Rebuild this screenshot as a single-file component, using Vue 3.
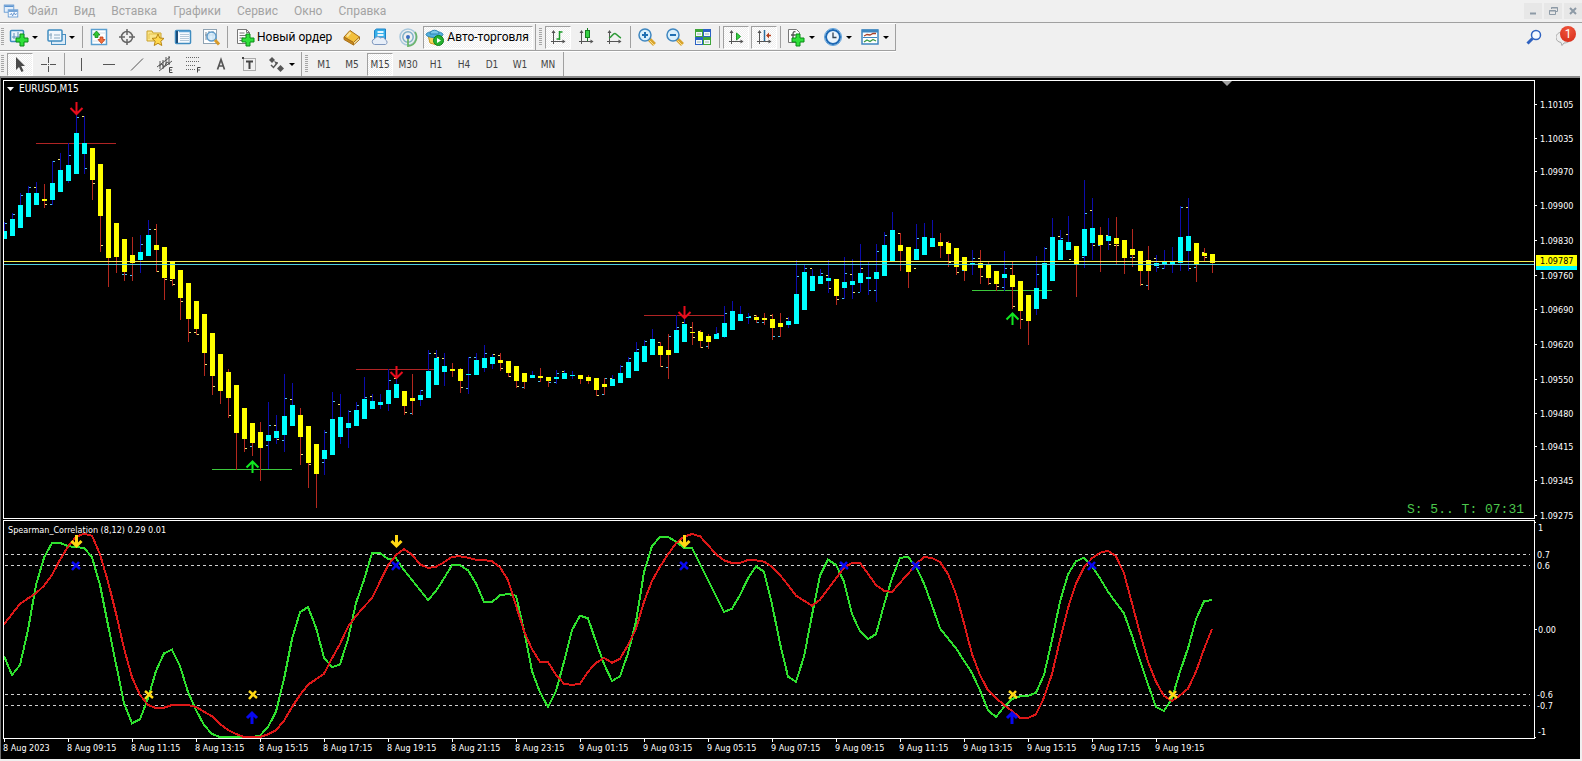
<script setup>
const menus = ['Файл', 'Вид', 'Вставка', 'Графики', 'Сервис', 'Окно', 'Справка']

const plus = (x, y) =>
  `<path d="M${x + 4} ${y}h4v4h4v4h-4v4h-4v-4h-4v-4h4z" fill="#2fe03a" stroke="#0b8a17"/>`

const axes = '<path d="M5.500 4v13M3 14.500h14" stroke="#555" fill="none"/><path d="M3.500 6l2-3 2 3zM14.500 12.500l3 2-3 2z" fill="#555"/>'

const icons = {
  app: '<rect x="1.500" y="2.500" width="12" height="9" fill="#e4effb" stroke="#5b93cf"/><path d="M2 4h11" stroke="#5b93cf" stroke-width="2"/><rect x="6.500" y="8.500" width="12" height="9" fill="#f4f9ff" stroke="#5b93cf"/><path d="M7 10h11" stroke="#5b93cf" stroke-width="2"/><path d="M8.500 15l2-2 1.500 3 2-4 1.500 3 1.500-2" fill="none" stroke="#4b83c4"/>',
  newChart: '<rect x="1.500" y="3.500" width="13" height="11" rx="1" fill="#eaf4fc" stroke="#3f8cc0" stroke-width="1.500"/><path d="M5 6v6M3 10h9M9 5v5" stroke="#5a8fb8"/>' + plus(7, 7),
  profiles: '<rect x="5.500" y="7.500" width="14" height="10" fill="#dcebf7" stroke="#4a8fbf"/><rect x="2" y="3" width="14" height="11" rx="1" fill="#f2f8fd" stroke="#3f8cc0" stroke-width="1.500"/><path d="M5 6v6M3 8h3M8 8h6M8 11h6" stroke="#8aa9c0"/>',
  market: '<rect x="2.500" y="2.500" width="15" height="15" fill="#fff" stroke="#5a9fd0" stroke-width="1.500"/><path d="M4 14h12M4 6h12" stroke="#d5dfe6"/><path d="M7.500 4l3.500 4h-2v2.500h-3v-2.500h-2z" fill="#32c832" stroke="#12851b" stroke-width=".8"/><path d="M12.500 16.500l3.500-4h-2v-2.500h-3v2.500h-2z" fill="#f0713d" stroke="#c23a14" stroke-width=".8"/>',
  target: '<circle cx="10" cy="10" r="5.500" fill="none" stroke="#666" stroke-width="1.500"/><path d="M10 2v6M10 12v6M2 10h6M12 10h6" stroke="#666" stroke-width="1.500"/>',
  navigator: '<path d="M2 4h5l1 2h8v8H2z" fill="#fbe58a" stroke="#c9a12c"/><path d="M4 12V7h12" fill="none" stroke="#e5c44f"/><path d="M13 7l1.800 4 4.200.4-3.200 2.900 1 4.200-3.800-2.200-3.800 2.200 1-4.200L7 11.400l4.200-.4z" fill="#ffd84d" stroke="#b98612"/>',
  terminal: '<rect x="2.500" y="3.500" width="15" height="13" rx="1" fill="#f7fbff" stroke="#3f8cc0" stroke-width="1.500"/><path d="M4 4v12" stroke="#1c4d7a" stroke-width="2"/><path d="M7 7.500h9M7 9.500h9M7 11.500h9M7 13.500h9" stroke="#b5c9d9"/><path d="M6 4.500h11" stroke="#5aa3d6" stroke-width="1.500"/>',
  tester: '<rect x="2.500" y="2.500" width="13" height="14" fill="#fff" stroke="#8fa3b3"/><path d="M5 5v8M8 4v9M12 4v9M4 8h10" stroke="#7b8b99"/><circle cx="10.500" cy="9.500" r="4.500" fill="#d6ecfb" fill-opacity=".85" stroke="#5e9ccb" stroke-width="1.500"/><path d="M14 13l4 4.500" stroke="#d79a2a" stroke-width="3"/>',
  order: '<path d="M2.500 2.500h9l3 3v11h-12z" fill="#fdfdfd" stroke="#777"/><path d="M11.500 2.500v3h3" fill="none" stroke="#777"/><path d="M4.500 6h5M4.500 8.500h7M4.500 11h4M4.500 13.500h3" stroke="#777"/>' + plus(7, 7),
  gold: '<path d="M2 10l6-6.500 9.500 6.500-6 5.500z" fill="#f3c03c" stroke="#a8701a"/><path d="M2 10l9.500 5.500v2.500L2 12.500z" fill="#c98a1c" stroke="#a8701a"/><path d="M11.500 15.500l6-5.500v2.500l-6 5.500z" fill="#fff0b0" stroke="#a8701a"/><path d="M5 9.500l3.500-4" stroke="#fbe39a" stroke-width="2"/>',
  cloud: '<path d="M4.500 3.500l2-1.500h9v10h-11z" fill="#38b0ea" stroke="#1c83c6"/><path d="M7.500 5h6M7.500 8h6" stroke="#e4f6ff" stroke-width="2"/><path d="M4.500 17.500a2.800 2.800 0 0 1 0-5.500 3.500 3.500 0 0 1 6-1 3.200 3.200 0 0 1 5 2 2.400 2.400 0 0 1 0 4.500z" fill="#e7eef8" stroke="#7f98bf"/>',
  signal: '<circle cx="10" cy="10" r="8" fill="none" stroke="#a8c8dd" stroke-width="1.500"/><circle cx="10" cy="10" r="5.200" fill="none" stroke="#7fb0c8" stroke-width="1.500"/><path d="M10 10v9a9 9 0 0 0 8-6 9 9 0 0 0-1-8" fill="none" stroke="#6cb56c" stroke-width="1.800"/><circle cx="10" cy="10" r="2" fill="#3d6fc0"/>',
  auto: '<path d="M3 8l2 8 7 2 4-5 1-5z" fill="#f5d35a" stroke="#c99a1e"/><ellipse cx="9.500" cy="7.500" rx="8.500" ry="3" fill="#54b0dd" stroke="#2b84b4"/><path d="M5 7c0-5 9-5 9 0z" fill="#7cc8ea" stroke="#2b84b4"/><circle cx="13.500" cy="13.500" r="5" fill="#25b12f" stroke="#0d7f1a"/><path d="M12 11v5l4-2.500z" fill="#fff"/>',
  bars: axes + '<path d="M11.500 4v9M11.500 5h3M8.500 12h3" stroke="#1d9a2a" stroke-width="1.500"/>',
  candles: axes + '<path d="M11.500 1v13" stroke="#167d20"/><rect x="9.500" y="3.500" width="4" height="7" fill="#35d243" stroke="#167d20"/>',
  line: axes + '<path d="M5 11c3-1 4-5 6-4.500S14 10 17 11" fill="none" stroke="#2e9a38" stroke-width="1.500"/>',
  zoomIn: '<path d="M12 12l5.500 5.500" stroke="#d8a42e" stroke-width="4"/><path d="M12.500 13.500l4.500 4.500" stroke="#fbe08a"/><circle cx="8" cy="8" r="6" fill="#d9effb" stroke="#3f87c0" stroke-width="1.500"/><path d="M5 8h6M8 5v6" stroke="#1f6fb2" stroke-width="2"/>',
  zoomOut: '<path d="M12 12l5.500 5.500" stroke="#d8a42e" stroke-width="4"/><path d="M12.500 13.500l4.500 4.500" stroke="#fbe08a"/><circle cx="8" cy="8" r="6" fill="#d9effb" stroke="#3f87c0" stroke-width="1.500"/><path d="M5 8h6" stroke="#1f6fb2" stroke-width="2"/>',
  tile: '<rect x="2" y="2" width="8" height="8" fill="#3ea53a"/><rect x="10" y="2" width="8" height="8" fill="#2b62c4"/><rect x="2" y="10" width="8" height="8" fill="#2b62c4"/><rect x="10" y="10" width="8" height="8" fill="#3ea53a"/><path d="M3 5h6v4H3zM11 5h6v4h-6zM3 13h6v4H3zM11 13h6v4h-6z" fill="#f4f8fc"/><path d="M4 7h4M12 7h4M4 15h4M12 15h4" stroke="#9ab8a8"/>',
  scroll: axes + '<path d="M10.500 6l4 3.500-4 3.500z" fill="#35d243" stroke="#1d9a2a"/>',
  shift: axes + '<path d="M10.500 3v11" stroke="#2a6f9f" stroke-width="1.500"/><path d="M17 8.500h-3" stroke="#b4401c" stroke-width="1.500"/><path d="M12 8.500l3-3v6z" fill="#b4401c"/>',
  indicators: '<path d="M2.500 2.500h8l3 3v10h-11z" fill="#fdfdfd" stroke="#777"/><path d="M9.500 5c-2-1-2.500.5-2.500 2v5.500M5 8h4.500" fill="none" stroke="#555" stroke-width="1.300"/>' + plus(6, 7),
  clock: '<circle cx="10" cy="10" r="7" fill="#eaf4fc" stroke="#1c68b4" stroke-width="2"/><circle cx="10" cy="10" r="8.500" fill="none" stroke="#5aa0dc" stroke-width="1"/><path d="M10 5.500V10.500h3.500" fill="none" stroke="#345" stroke-width="1.300"/>',
  template: '<rect x="2" y="3" width="16" height="14" fill="#fff" stroke="#3f87c0" stroke-width="1.500"/><path d="M2 4h16" stroke="#3f87c0" stroke-width="3"/><path d="M3 10.500h14" stroke="#3f87c0"/><path d="M4 9l3-1.500 3 .5 3-1.500h3" fill="none" stroke="#a8432a" stroke-width="1.300"/><path d="M4 15l3-2 3 1.500 3-2 3 1.500" fill="none" stroke="#3a9a44" stroke-width="1.300"/>',
  cursor: '<path d="M6 3v13l3-3 2.500 5 2-1-2.300-5H15z" fill="#4a4a4a"/>',
  cross: '<path d="M10.500 3v6M10.500 12v6M3 10.500h6M12 10.500h6" stroke="#555"/><path d="M10 10h1v1h-1z" fill="#555"/>',
  vline: '<path d="M10.500 4v13" stroke="#555"/>',
  hline: '<path d="M4 10.500h12" stroke="#555"/>',
  trend: '<path d="M4 16.500L16 4.500" stroke="#555"/>',
  channel: '<path d="M2 13L15 3M4 17L17 7" stroke="#555"/><path d="M5 7v8M8 6v9M11 3v9M14 2v9M4 12l3-2 2 3 3-5 3 2" fill="none" stroke="#555"/><path d="M17.500 13.500h-3v5h3M14.500 16h2.500" fill="none" stroke="#444"/>',
  fibo: '<path d="M3 3.500h14M3 7.500h14M3 11.500h10M3 15.500h9" stroke="#666" stroke-dasharray="1 1"/><path d="M17.500 13.500h-3v5M14.500 16h2.500" fill="none" stroke="#444"/>',
  textA: '<path d="M6.500 15.500l3.500-10 3.500 10M8 12h4" fill="none" stroke="#555" stroke-width="1.700"/>',
  textT: '<rect x="4.500" y="4.500" width="12" height="12" fill="none" stroke="#666" stroke-dasharray="1 1"/><path d="M7 7.500h7M10.500 8v7" stroke="#444" stroke-width="2"/><path d="M3 3h2v2H3z" fill="#444"/>',
  shapes: '<path d="M6 3l3 3-3 3-3-3z" fill="#555"/><path d="M8 7l4 1.500-2 2z" fill="#555"/><path d="M14.500 11l3.500 3.500-3.500 3.500-3.500-3.500z" fill="#555"/><path d="M5 11l2.500 2.500 4-5" fill="none" stroke="#555" stroke-width="1.500"/>',
  search: '<circle cx="12" cy="8" r="4.500" fill="#f5f9ff" stroke="#2f62c0" stroke-width="1.500"/><path d="M8.500 11.500L3.500 16.500" stroke="#2f62c0" stroke-width="3"/>',
  chat: '<path d="M7 5c5 0 8 2.500 8 5.500S12 16 8 16l-2 2.500-1-3C2 15 0 13 0 10.500S2 5 7 5z" fill="#eee" stroke="#a8a8a8"/>'
}

const mainTools = [
  { id: 'newChart', label: 'Новый график', drop: true },
  { id: 'profiles', label: 'Профили', drop: true },
  { sep: true },
  { id: 'market', label: 'Обзор рынка' },
  { id: 'target', label: 'Окно данных' },
  { id: 'navigator', label: 'Навигатор' },
  { id: 'terminal', label: 'Терминал' },
  { id: 'tester', label: 'Тестер стратегий' },
  { sep: true },
  { id: 'order', label: 'Новый ордер', text: 'Новый ордер' },
  { id: 'gold', label: 'Редактор' },
  { id: 'cloud', label: 'Облако' },
  { id: 'signal', label: 'Сигналы' },
  { id: 'auto', label: 'Авто-торговля', text: 'Авто-торговля', on: true }
]

const chartTools = [
  { id: 'bars', label: 'Бары', on: true },
  { id: 'candles', label: 'Свечи' },
  { id: 'line', label: 'Линия' },
  { sep: true },
  { id: 'zoomIn', label: 'Увеличить' },
  { id: 'zoomOut', label: 'Уменьшить' },
  { id: 'tile', label: 'Окна мозаикой' },
  { sep: true },
  { id: 'scroll', label: 'Автопрокрутка', on: true },
  { id: 'shift', label: 'Сдвиг графика', on: true },
  { sep: true },
  { id: 'indicators', label: 'Индикаторы', drop: true },
  { id: 'clock', label: 'Периоды', drop: true },
  { id: 'template', label: 'Шаблоны', drop: true }
]

const drawTools = [
  { id: 'cursor', label: 'Курсор', on: true },
  { id: 'cross', label: 'Перекрестие' },
  { sep: true },
  { id: 'vline', label: 'Вертикальная линия' },
  { id: 'hline', label: 'Горизонтальная линия' },
  { id: 'trend', label: 'Трендовая линия' },
  { id: 'channel', label: 'Канал' },
  { id: 'fibo', label: 'Фибоначчи' },
  { id: 'textA', label: 'Текст' },
  { id: 'textT', label: 'Метка' },
  { id: 'shapes', label: 'Стрелки', drop: true }
]

const frames = ['M1', 'M5', 'M15', 'M30', 'H1', 'H4', 'D1', 'W1', 'MN']

const bars = [4, 8]
const cx = (i) => bars[0] + bars[1] * i

// One bar per entry: direction, wick top, body top, body bottom, wick bottom.
const candles = `
u222,231,239,239 u213,219,236,236 u193,205,228,228 u186,193,217,217 u182,193,205,205 d184,199,201,208
u161,183,200,205 u153,170,192,192 u143,165,181,183 u114,133,174,174 u116,143,154,174 d148,148,180,200
d164,164,216,252 d189,189,258,287 d223,223,257,273 d239,239,272,281 d237,255,263,281 u235,252,260,273
u220,235,256,256 d224,245,250,272 d247,247,278,300 d262,262,279,286 d270,270,298,320 d283,283,319,342
d301,301,329,335 d314,314,353,376 d333,333,376,395 d354,354,391,404 d369,372,398,418 d385,385,433,470
d408,408,439,452 d423,423,443,456 d422,432,448,481 u402,435,441,469 u415,431,438,444 u374,416,435,452
u383,405,426,426 d408,415,437,465 d426,426,463,488 d444,444,474,508 u430,450,459,475 u392,419,455,455
u394,417,437,444 u410,423,428,448 u402,410,426,426 u377,399,419,419 u394,401,409,409 u394,402,405,409
u369,390,404,411 u378,384,398,398 d391,391,406,415 d374,398,401,415 u390,395,400,406 u350,371,398,398
u350,358,385,385 u353,366,372,386 d363,369,371,377 d368,369,381,393 u357,374,375,394 u353,360,375,375
u345,358,368,372 u354,357,364,369 d353,360,363,371 d361,361,373,377 d366,366,381,388 d373,373,382,389
u371,375,378,378 d368,376,378,382 d377,377,381,387 u370,377,379,384 u370,373,379,379 u371,375,376,379
d375,375,379,384 d375,377,381,384 d378,378,390,396 d378,384,387,395 u375,379,386,386 u365,373,383,383
u357,362,378,378 u342,352,371,371 u340,346,362,362 u329,339,355,355 d342,346,355,367 d334,350,355,379
u315,330,353,353 u318,324,342,342 d322,332,333,345 d330,332,341,348 d334,336,342,349 u327,334,339,339
u306,323,337,338 u301,311,330,330 u306,314,321,321 u313,317,318,324 d315,317,320,323 d313,318,320,325
d314,319,328,340 d313,323,327,337 u317,321,325,328 u260,294,324,324 u264,272,310,310 u269,276,291,291
u269,276,284,284 u260,278,281,293 d279,279,296,305 u257,282,288,299 u259,281,285,299 u244,273,283,292
u262,277,279,295 u244,272,279,302 u232,245,276,276 u212,230,261,261 d233,245,251,271 d247,247,272,288
u224,249,260,260 u223,237,255,255 u220,238,247,247 d233,242,246,258 d241,243,254,267 d248,248,267,275
d257,257,271,281 u250,263,264,275 d250,263,268,284 d262,265,278,285 d271,271,284,291 u251,274,278,291
d262,275,287,309 d281,281,311,329 d295,295,321,345 u256,288,309,315 u247,263,299,299 u218,237,281,281
u230,240,260,260 u216,242,250,250 d246,246,264,297 u180,229,256,268 u198,228,243,260 d227,235,245,272
u218,236,241,250 d217,238,244,264 d240,240,258,274 d229,249,255,267 d251,251,271,286 d246,260,271,290
u255,263,266,272 u250,262,265,269 u247,262,265,273 u206,237,263,271 u198,236,251,271 d243,243,264,282
d248,253,256,262 d254,254,263,273`
  .trim()
  .split(/\s+/)
  .map((s, i) => {
    const [top, open, close, bottom] = s.slice(1).split(',').map(Number)
    return { up: s[0] === 'u', x: cx(i), top, open, close, bottom }
  })

// Small level ticks beside the bars: bar index, side, height, colour.
const ticks = `
0R223c 1R214c 2R195c 3R187c 4L187y 5R204y 6R161c 6L204c 7L159y 8R155c 9R117c 10L116y 10R168c 11R183y 12R245y
15L274c 15R274c 16L275c 17R244c 18R229c 19L229y 19R271y 20R279y 21L280y 21R284y 22R301y 23R332y 24L332y 24R334y
25R364y 26R386y 28R415y 30R448y 31L446c 33R425c 33L445c 34L425y 34R439y 35R398c 35L440c 36L399y 37R454y 38R464y
40R432c 40L462c 41R401c 42L404y 43R411c 44R405c 45R397c 46L396y 48R380c 49L378y 50R412y 51L413c 52R390c 53R353c
54L353y 54R357y 55L358y 57R387y 58L388c 58R357c 59L357c 60R353c 61R354y 62L355y 62R368y 63R376y 64R386y 65L387c
67L381c 68R382c 69L382c 69R373c 70L371y 74R395y 75L394c 75R378c 76L378y 77R366c 78R358c 79R349c 80R341c 82L342y
82R366y 83L367c 83R336c 84R327c 85L322y 86L327y 86R337y 87L331y 87R347y 88L346c 89R333c 90R313c 93R316c 94L315y
94R322c 95L322c 95R318y 96L315y 96R336c 97L336c 98L318y 99R276c 100R268c 101L268y 102R273c 103L275y 103R288y
104R299y 105L298c 105R273c 106L274y 106R292y 107L292c 107R268y 108R290c 109L290c 109R251c 110R235c 112L233y
114R238c 114L268y 118L242y 118R262y 119R272y 120L270c 121R258c 122L258y 122R276y 123R283y 124R286y 125L287c
125R268c 126L268y 126R306y 127R319y 129R274c 130R248c 132L236y 132R238c 133L234y 133R259y 134L259y 135R213c
135L257c 136L210y 136R245y 137L245c 138L235y 138R244y 139L245y 139R245y 141L257c 141R257y 142R284y 143L285c
143R268y 144L258y 144R267c 145L268c 147R207c 148L207y 148R268y 149L267c 150L252y 150R257y`
  .trim()
  .split(/\s+/)
  .map((s) => {
    const [, i, side, y, tone] = s.match(/(\d+)([LR])(\d+)(\w)/)
    return { x: cx(+i) + (side === 'R' ? 1 : -2), y: +y, tone }
  })

const levels = [
  { x: 36, y: 143, kind: 'sell' },
  { x: 212, y: 469, kind: 'buy' },
  { x: 356, y: 369, kind: 'sell' },
  { x: 644, y: 315, kind: 'sell' },
  { x: 972, y: 290, kind: 'buy' }
]
const arrows = [
  { x: 76, y: 102, kind: 'sell' },
  { x: 396, y: 366, kind: 'sell' },
  { x: 684, y: 306, kind: 'sell' },
  { x: 252, y: 461, kind: 'buy' },
  { x: 1012, y: 313, kind: 'buy' }
]

const prices = [
  [104, '1.10105'], [138, '1.10035'], [171, '1.09970'], [205, '1.09900'], [240, '1.09830'],
  [275, '1.09760'], [309, '1.09690'], [344, '1.09620'], [379, '1.09550'], [413, '1.09480'],
  [446, '1.09415'], [480, '1.09345'], [515, '1.09275']
]

// Indicator series, in thirds of a pixel below the pane's top.
const toLine = (v) => v.map((y, i) => `${cx(i)},${(515 + y / 3).toFixed(1)}`).join(' ')
const fast = toLine([
  423, 480, 450, 345, 210, 128, 84, 84, 93, 97, 98, 127, 210, 330, 447, 565, 625, 613, 550, 468, 415, 404, 453, 531,
  585, 630, 657, 666, 666, 666, 666, 666, 662, 636, 590, 492, 372, 292, 276, 338, 428, 457, 448, 373, 264, 195, 115,
  114, 132, 130, 165, 195, 225, 255, 228, 190, 151, 151, 166, 205, 261, 261, 241, 237, 242, 345, 468, 532, 576, 528,
  440, 345, 302, 310, 380, 447, 498, 484, 415, 320, 172, 93, 66, 66, 80, 98, 99, 147, 195, 243, 291, 281, 240, 190,
  154, 170, 268, 385, 485, 500, 425, 300, 182, 134, 150, 200, 297, 349, 373, 357, 270, 190, 129, 125, 156, 205, 271,
  340, 370, 400, 437, 474, 526, 586, 606, 576, 552, 544, 543, 533, 480, 375, 260, 178, 139, 128, 153, 190, 230, 263,
  295, 362, 437, 508, 576, 588, 550, 470, 400, 313, 259, 255
])
const slow = toLine([
  328, 297, 267, 250, 235, 212, 180, 134, 95, 66, 56, 62, 118, 200, 295, 400, 487, 540, 570, 579, 578, 570, 570, 570,
  576, 590, 604, 627, 645, 657, 666, 666, 666, 658, 646, 617, 576, 540, 509, 493, 476, 430, 387, 335, 303, 275, 250,
  200, 151, 120, 102, 119, 148, 159, 155, 142, 125, 124, 128, 134, 135, 139, 157, 195, 272, 348, 403, 440, 441, 480,
  506, 510, 506, 470, 444, 429, 443, 431, 390, 342, 260, 198, 155, 118, 85, 65, 57, 64, 90, 118, 136, 144, 144, 135,
  136, 140, 155, 180, 210, 242, 257, 272, 254, 222, 190, 158, 144, 144, 176, 210, 227, 231, 203, 177, 147, 126, 129,
  141, 177, 237, 325, 417, 480, 526, 549, 570, 588, 608, 609, 598, 548, 477, 375, 279, 205, 157, 130, 113, 107, 124,
  175, 265, 355, 440, 500, 543, 558, 541, 521, 470, 402, 342
])
const bands = [554, 565, 694, 705]
const crosses = [
  [75, 565, 'blue'], [395, 565, 'blue'], [683, 565, 'blue'], [843, 565, 'blue'], [915, 565, 'blue'],
  [1091, 565, 'blue'], [148, 694, 'gold'], [252, 694, 'gold'], [1012, 694, 'gold'], [1172, 694, 'gold']
]
const signals = [
  [76, 535, 'gold'], [396, 535, 'gold'], [684, 535, 'gold'], [252, 711, 'blue'], [1012, 711, 'blue']
]
const scale = [
  [527, '1', 4], [554, '0.7', 3], [565, '0.6', 3], [629, '0.00', 4], [694, '-0.6', 3], [705, '-0.7', 3], [731, '-1', 4]
]

const times = [
  '8 Aug 2023', '8 Aug 09:15', '8 Aug 11:15', '8 Aug 13:15', '8 Aug 15:15', '8 Aug 17:15', '8 Aug 19:15',
  '8 Aug 21:15', '8 Aug 23:15', '9 Aug 01:15', '9 Aug 03:15', '9 Aug 05:15', '9 Aug 07:15', '9 Aug 09:15',
  '9 Aug 11:15', '9 Aug 13:15', '9 Aug 15:15', '9 Aug 17:15', '9 Aug 19:15'
]
</script>

<template>
  <div class="terminal">
    <header class="menubar">
      <svg class="app-icon" viewBox="0 0 20 20" v-html="icons.app"></svg>
      <nav class="menus">
        <button v-for="m in menus" :key="m" type="button">{{ m }}</button>
      </nav>
      <div class="window-controls">
        <button type="button" aria-label="Свернуть"><svg viewBox="0 0 16 16"><path d="M5 10.500h6" stroke-width="2" /></svg></button>
        <button type="button" aria-label="Восстановить"><svg viewBox="0 0 16 16"><path d="M6.500 6V4.500h6v4H11M4.500 7.500h6v4h-6zM6 5h7M4 8h7" /></svg></button>
        <button type="button" aria-label="Закрыть"><svg viewBox="0 0 16 16"><path d="M5 5l6 6M11 5l-6 6" stroke-width="2" /></svg></button>
      </div>
    </header>

    <div class="row">
      <div class="toolbar upper">
        <template v-for="(group, g) in [mainTools, chartTools]" :key="g">
          <span class="grip"></span>
          <template v-for="(t, n) in group" :key="n">
            <span v-if="t.sep" class="sep"></span>
            <button v-else type="button" class="tool" :class="{ on: t.on, drop: t.drop, wide: t.text }" :aria-label="t.label">
              <svg class="icon" viewBox="0 0 20 20" v-html="icons[t.id]"></svg>
              <span v-if="t.text">{{ t.text }}</span>
              <i v-if="t.drop" class="caret"></i>
            </button>
          </template>
          <span class="edge"></span>
        </template>
      </div>
      <div class="corner">
        <button type="button" aria-label="Поиск"><svg class="icon" viewBox="0 0 20 20" v-html="icons.search"></svg></button>
        <button type="button" class="chat" aria-label="Сообщения">
          <svg class="icon" viewBox="0 0 20 20" v-html="icons.chat"></svg>
          <span class="badge">1</span>
        </button>
      </div>
    </div>

    <div class="toolbar lower">
      <span class="grip"></span>
      <template v-for="(t, n) in drawTools" :key="n">
        <span v-if="t.sep" class="sep"></span>
        <button v-else type="button" class="tool" :class="{ on: t.on, drop: t.drop }" :aria-label="t.label">
          <svg class="icon" viewBox="0 0 20 20" v-html="icons[t.id]"></svg>
          <i v-if="t.drop" class="caret"></i>
        </button>
      </template>
      <span class="edge"></span>
      <span class="grip"></span>
      <button v-for="f in frames" :key="f" type="button" class="tool frame" :class="{ on: f === 'M15' }">{{ f }}</button>
      <span class="edge"></span>
    </div>

    <main class="chart">
      <div class="plot price">
        <svg class="canvas">
          <g transform="translate(-4 -81)" shape-rendering="crispEdges">
            <rect v-for="(l, n) in levels" :key="'l' + n" :x="l.x" :y="l.y" width="80" height="1" :class="['level', l.kind]" />
            <g v-for="c in candles" :key="c.x" :class="c.up ? 'up' : 'down'">
              <rect class="wick" :x="c.x" :y="c.top" width="1" :height="c.bottom - c.top" />
              <rect class="body" :x="c.x - 2" :y="c.open" width="5" :height="c.close - c.open" />
            </g>
            <rect v-for="(t, n) in ticks" :key="'t' + n" :x="t.x" :y="t.y" width="2" height="1" :class="['tick', t.tone]" />
            <rect class="ask" x="4" y="261" width="100%" height="1" />
            <rect class="bid" x="4" y="264" width="100%" height="1" />
          </g>
          <g transform="translate(-4 -81)">
            <path
              v-for="(a, n) in arrows"
              :key="n"
              :class="['arrow', a.kind]"
              :d="a.kind === 'sell'
                ? `M${a.x + 0.5} ${a.y}v11M${a.x - 5.5} ${a.y + 6}l6 6 6-6`
                : `M${a.x + 0.5} ${a.y + 12}v-11M${a.x - 5.5} ${a.y + 6.5}l6-6 6 6`"
            />
            <path d="M7 87h7l-3.500 4z" fill="#fff" />
            <path d="M1222 81h10l-5 5z" fill="#a0a0a0" />
            <text class="caption title" x="19" y="92">EURUSD,M15</text>
          </g>
        </svg>
        <span class="status">S: 5.. T: 07:31</span>
      </div>
      <svg class="axis price-axis">
        <g transform="translate(-1535 -80)">
          <g v-for="p in prices" :key="p[1]">
            <rect x="1535" :y="p[0]" width="2" height="1" fill="#fff" />
            <text x="1540" :y="p[0] + 4">{{ p[1] }}</text>
          </g>
          <rect x="1536" y="258" width="41" height="12" fill="#00ffff" />
          <rect x="1536" y="255" width="41" height="11" fill="#ffff00" />
          <text class="current" x="1540" y="264">1.09787</text>
        </g>
      </svg>

      <div class="plot study">
        <svg class="canvas">
          <g transform="translate(-4 -521)" shape-rendering="crispEdges">
            <line v-for="y in bands" :key="y" class="band" x1="5" :y1="y + 0.5" x2="100%" :y2="y + 0.5" />
            <polyline class="fast" :points="fast" />
            <polyline class="slow" :points="slow" />
          </g>
          <g transform="translate(-4 -521)">
            <path
              v-for="(s, n) in signals"
              :key="'s' + n"
              :class="['signal', s[2]]"
              :d="s[2] === 'gold'
                ? `M${s[0] + 0.5} ${s[1]}v11M${s[0] - 4.5} ${s[1] + 6}l5 5 5-5`
                : `M${s[0]} ${s[1] + 13}v-11M${s[0] - 5} ${s[1] + 7}l5-5 5 5`"
            />
            <path
              v-for="(c, n) in crosses"
              :key="'c' + n"
              :class="['signal', 'cross', c[2]]"
              :d="`M${c[0] - 3} ${c[1] - 3}l8 7M${c[0] + 4} ${c[1] - 3}l-7 8`"
            />
            <text class="caption" x="8" y="533">Spearman_Correlation (8,12) 0.29 0.01</text>
          </g>
        </svg>
      </div>
      <svg class="axis study-axis">
        <g transform="translate(-1535 -520)">
          <rect x="1535" y="522" width="1" height="1" fill="#fff" />
          <rect x="1535" y="629" width="2" height="1" fill="#fff" />
          <rect x="1535" y="737" width="1" height="1" fill="#fff" />
          <text v-for="s in scale" :key="s[1]" :x="1534 + s[2]" :y="s[0] + 4">{{ s[1] }}</text>
        </g>
      </svg>

      <div class="time-axis">
        <span v-for="t in times" :key="t">{{ t }}</span>
      </div>
    </main>
  </div>
</template>

<style>
html,
body {
  background: #f0f0f0;
}
</style>

<style scoped>
.terminal {
  min-height: 100vh;
  display: flex;
  flex-direction: column;
  box-sizing: border-box;
  background: #f0f0f0;
  font-family: Roboto, "Noto Sans", sans-serif;
  font-size: 12px;
  overflow: hidden;
}
button {
  border: 0;
  margin: 0;
  padding: 0;
  background: none;
  font: inherit;
  color: inherit;
}
.menubar {
  display: flex;
  align-items: center;
  height: 22px;
  border-bottom: 1px solid #a0a0a0;
}
.app-icon {
  width: 16px;
  height: 16px;
  margin-left: 3px;
}
.menus {
  display: flex;
  flex: 1;
  margin-left: 1px;
  color: #a3a3a3;
}
.menus button {
  padding: 0 8px;
  line-height: 18px;
}
.window-controls {
  display: flex;
  gap: 2px;
}
.window-controls button {
  width: 18px;
  height: 16px;
  background: #e7e7e7;
}
.window-controls svg {
  display: block;
  width: 16px;
  height: 16px;
  margin: 0 auto;
  fill: none;
  stroke: #8d9aa6;
}
.row {
  display: flex;
  justify-content: space-between;
}
.toolbar {
  display: flex;
  align-items: center;
}
.upper {
  height: 26px;
  border-top: 1px solid #fff;
  border-bottom: 1px solid #a0a0a0;
  box-shadow: 0 1px 0 #fff;
}
.lower {
  height: 24px;
  margin-top: 1px;
}
.grip {
  width: 3px;
  height: 18px;
  margin: 0 2px 0 1px;
  background: repeating-linear-gradient(#a6a6a6 0 1px, #f0f0f0 1px 2px);
}
.edge {
  width: 1px;
  align-self: stretch;
  margin: 0 2px 0 1px;
  background: #a0a0a0;
}
.edge:last-child {
  margin-right: 0;
}
.sep {
  width: 1px;
  height: 22px;
  margin: 0 2px 0 2px;
  background: #a0a0a0;
}
.tool {
  display: flex;
  align-items: center;
  justify-content: center;
  box-sizing: border-box;
  width: 26px;
  height: 23px;
  margin: 0 1px;
  border: 1px solid transparent;
  white-space: nowrap;
}
.tool.on {
  border-color: #a0a0a0 #fff #fff #a0a0a0;
  background: repeating-conic-gradient(#fff 0 25%, #eee 0 50%) 0 0 / 2px 2px;
}
.tool.drop {
  width: 35px;
  gap: 3px;
  justify-content: flex-start;
  padding-left: 1px;
}
.tool.wide {
  width: auto;
  gap: 2px;
  padding: 0 4px 0 3px;
  color: #000;
}
.tool.wide.on {
  padding: 0 3px 0 1px;
}
.icon {
  display: block;
  flex: none;
  width: 20px;
  height: 20px;
}
.caret {
  border: 3px solid transparent;
  border-top-color: #000;
  border-bottom-width: 0;
}
.frame {
  font-family: "DejaVu Sans Condensed", "DejaVu Sans", sans-serif;
  font-size: 10px;
  color: #444;
}
.corner {
  display: flex;
  align-items: center;
  gap: 12px;
  padding-right: 6px;
}
.chat {
  position: relative;
}
.badge {
  position: absolute;
  top: -1px;
  right: 0;
  width: 16px;
  height: 16px;
  border-radius: 50%;
  background: radial-gradient(circle at 50% 25%, #f0563c, #d42a18);
  color: #fff;
  font-size: 12px;
  line-height: 16px;
  text-align: center;
}
.chart {
  display: grid;
  grid-template-columns: minmax(0, 1fr) 45px;
  row-gap: 1px;
  margin-right: 2px;
  padding: 2px 0 0 2px;
  border-top: 2px solid #8a8a8a;
  border-left: 1px solid #6e6e6e;
  background: #000;
  font-family: "DejaVu Sans Condensed", "DejaVu Sans", sans-serif;
  font-size: 9px;
}
.plot {
  position: relative;
  border: 1px solid #fff;
}
.canvas {
  display: block;
  width: 100%;
}
.price .canvas {
  height: 437px;
}
.study .canvas {
  height: 217px;
}
.axis {
  width: 45px;
  overflow: visible;
  fill: #fff;
}
.price-axis {
  height: 439px;
}
.study-axis {
  height: 219px;
}
.current {
  fill: #000;
}
.caption {
  fill: #fff;
}
.title {
  font-size: 10px;
}
.up .wick {
  fill: #0c0cac;
}
.up .body {
  fill: #00ffff;
}
.down .wick {
  fill: #b4281e;
}
.down .body {
  fill: #ffff00;
}
.tick.c {
  fill: #4fc3f0;
}
.tick.y {
  fill: #f5e86e;
}
.level.sell {
  fill: #b02424;
}
.level.buy {
  fill: #3cc83c;
}
.ask {
  fill: #f4f050;
}
.bid {
  fill: #4fd0e0;
}
.arrow {
  fill: none;
  stroke-width: 2;
}
.arrow.sell {
  stroke: #e80c1c;
}
.arrow.buy {
  stroke: #10e820;
}
.band {
  stroke: #d0d0d0;
  stroke-dasharray: 3 3;
}
.fast,
.slow {
  fill: none;
  stroke: #2fe02f;
  stroke-width: 2;
}
.slow {
  stroke: #dc1818;
}
.signal {
  fill: none;
  stroke-width: 3;
}
.signal.cross {
  stroke-width: 2.5;
}
.signal.gold {
  stroke: #ffd814;
}
.signal.blue {
  stroke: #0808f0;
}
.status {
  position: absolute;
  right: 10px;
  bottom: 0;
  font-family: "Liberation Mono", monospace;
  font-size: 13px;
  line-height: 16px;
  color: #4cc84c;
  white-space: pre;
}
.time-axis {
  display: flex;
  grid-column: 1 / -1;
  height: 20px;
  margin-top: -1px;
  color: #fff;
  overflow: hidden;
}
.time-axis span {
  position: relative;
  flex: 0 0 64px;
  line-height: 19px;
  white-space: nowrap;
}
.time-axis span::before {
  content: "";
  position: absolute;
  left: 1px;
  top: 0;
  width: 1px;
  height: 3px;
  background: #fff;
}
</style>
